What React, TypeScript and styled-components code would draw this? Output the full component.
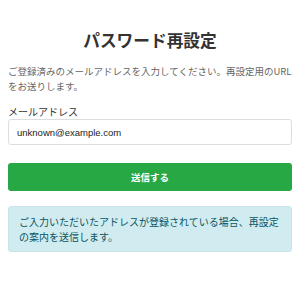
import React from "react";
import styled, { createGlobalStyle } from "styled-components";

const Global = createGlobalStyle`
  html, body { margin: 0; padding: 0; background: #fff; }
  body { font-family: "Noto Sans CJK JP", "Noto Sans", sans-serif; }
  * { box-sizing: border-box; }
`;

const Page = styled.div`
  display: flex;
  flex-direction: column;
  padding: 29px 8px 0;
  width: 300px;
`;

const Title = styled.h1`
  margin: 0 0 12px;
  font-size: 16.7px;
  line-height: 23px;
  font-weight: 700;
  color: #333;
  text-align: center;
`;

const Lead = styled.p`
  margin: 0 0 11px;
  font-size: 9.5px;
  line-height: 15px;
  color: #666;
`;

const Label = styled.label`
  display: block;
  font-size: 10px;
  line-height: 14px;
  color: #333;
`;

const Input = styled.input`
  height: 26px;
  width: 100%;
  margin: 0 0 18px;
  padding: 0 8px;
  border: 1px solid #ddd;
  border-radius: 3px;
  font-family: "Liberation Sans", Arial, sans-serif;
  font-size: 9.5px;
  color: #222;
  outline: none;
`;

const Button = styled.button`
  height: 28px;
  width: 100%;
  margin: 0 0 15px;
  border: none;
  border-radius: 3px;
  background: #28a745;
  color: #fff;
  font-family: "Noto Sans CJK JP", sans-serif;
  font-size: 9.5px;
  font-weight: 700;
`;

const Alert = styled.div`
  background: #d1ecf1;
  border: 1px solid #c7e6ec;
  border-radius: 3px;
  padding: 7px 10px;
  font-size: 10px;
  line-height: 15px;
  color: #0c5460;
`;

export default function App() {
  return (
    <>
      <Global />
      <Page>
        <Title>パスワード再設定</Title>
        <Lead>
          ご登録済みのメールアドレスを入力してください。再設定用のURLをお送りします。
        </Lead>
        <Label>メールアドレス</Label>
        <Input defaultValue="unknown@example.com" />
        <Button>送信する</Button>
        <Alert>
          ご入力いただいたアドレスが登録されている場合、再設定の案内を送信します。
        </Alert>
      </Page>
    </>
  );
}
